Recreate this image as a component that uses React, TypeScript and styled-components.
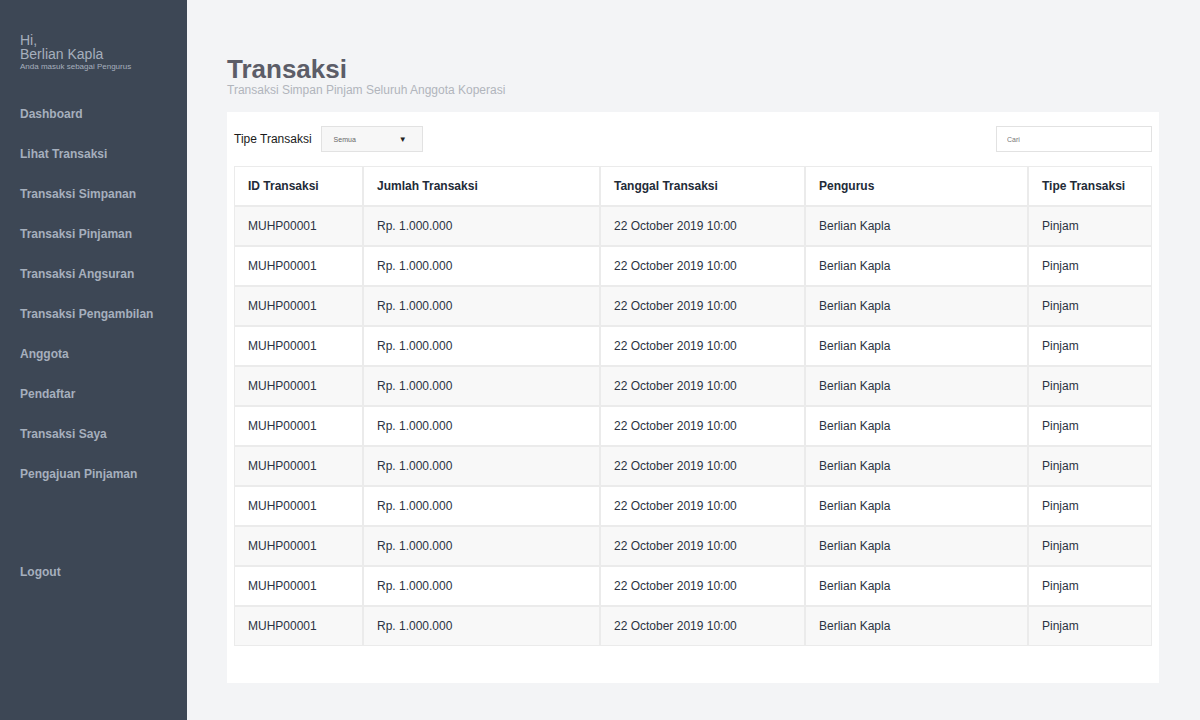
import React from "react";
import styled, { createGlobalStyle } from "styled-components";

const Global = createGlobalStyle`
  html, body { margin: 0; padding: 0; }
  body { font-family: "Liberation Sans", Arial, sans-serif; background: #f3f4f6; }
  * { box-sizing: border-box; }
`;

const Layout = styled.div`
  display: flex;
  width: 1200px;
  height: 720px;
  overflow: hidden;
`;

const Sidebar = styled.aside`
  width: 187px;
  flex-shrink: 0;
  background: #3d4755;
  padding: 33px 0 0 20px;
  display: flex;
  flex-direction: column;
`;

const Greeting = styled.div`
  color: #a6afbd;
  font-size: 14px;
  line-height: 14px;
`;

const Role = styled.div`
  color: #a6afbd;
  font-size: 8px;
  line-height: 10px;
  margin-top: 1px;
`;

const Nav = styled.nav`
  display: flex;
  flex-direction: column;
  margin-top: 22px;
`;

const NavItem = styled.a<{ $gap?: number }>`
  color: #a6afbd;
  font-weight: bold;
  font-size: 12px;
  line-height: 14px;
  padding: 13px 0;
  margin-top: ${(p) => p.$gap ?? 0}px;
  text-decoration: none;
  cursor: pointer;
`;

const Main = styled.main`
  flex: 1;
  padding: 54px 41px 0 40px;
  display: flex;
  flex-direction: column;
`;

const Title = styled.h1`
  margin: 0;
  font-size: 26px;
  line-height: 30px;
  font-weight: bold;
  color: #5c5d68;
`;

const Subtitle = styled.div`
  font-size: 12px;
  line-height: 14px;
  color: #b1b5bc;
  margin-top: -1px;
`;

const Card = styled.section`
  margin-top: 15px;
  background: #ffffff;
  padding: 14px 7px 37px 7px;
  display: flex;
  flex-direction: column;
`;

const Toolbar = styled.div`
  display: flex;
  align-items: center;
  justify-content: space-between;
  height: 26px;
`;

const FilterGroup = styled.div`
  display: flex;
  align-items: center;
  gap: 9px;
`;

const Label = styled.span`
  font-size: 12px;
  color: #1a1a1a;
`;

const Select = styled.div`
  width: 102px;
  height: 26px;
  border: 1px solid #e2e2e2;
  background: #f7f7f7;
  display: flex;
  align-items: center;
  justify-content: space-between;
  padding: 0 15px 0 12px;
  font-size: 7px;
  color: #666666;
`;

const Arrow = styled.span`
  font-size: 8px;
  color: #222;
`;

const Search = styled.input`
  width: 156px;
  height: 26px;
  border: 1px solid #e2e2e2;
  background: #ffffff;
  padding: 0 10px;
  font-size: 7px;
  font-family: "Liberation Sans", Arial, sans-serif;
  color: #666666;
  outline: none;
  &::placeholder { color: #777777; }
`;

const Table = styled.table`
  margin-top: 14px;
  width: 918px;
  border-collapse: separate;
  border-spacing: 0;
  table-layout: fixed;
`;

const Th = styled.th<{ $w: number }>`
  width: ${(p) => p.$w}px;
  height: 40px;
  border: 1px solid #ebebeb;
  padding: 0 13px;
  text-align: left;
  font-size: 12px;
  font-weight: bold;
  color: #232b38;
  background: #ffffff;
`;

const Tr = styled.tr<{ $alt: boolean }>`
  background: ${(p) => (p.$alt ? "#f8f8f8" : "#ffffff")};
`;

const Td = styled.td`
  height: 40px;
  border: 1px solid #ebebeb;
  padding: 0 13px;
  font-size: 12px;
  color: #2b3342;
`;

const navItems = [
  "Dashboard",
  "Lihat Transaksi",
  "Transaksi Simpanan",
  "Transaksi Pinjaman",
  "Transaksi Angsuran",
  "Transaksi Pengambilan",
  "Anggota",
  "Pendaftar",
  "Transaksi Saya",
  "Pengajuan Pinjaman",
];

const cols = [
  { label: "ID Transaksi", w: 129 },
  { label: "Jumlah Transaksi", w: 237 },
  { label: "Tanggal Transaksi", w: 205 },
  { label: "Pengurus", w: 223 },
  { label: "Tipe Transaksi", w: 124 },
];

const rows = Array.from({ length: 11 }, () => ({
  id: "MUHP00001",
  amount: "Rp. 1.000.000",
  date: "22 October 2019 10:00",
  admin: "Berlian Kapla",
  type: "Pinjam",
}));

export default function App() {
  return (
    <>
      <Global />
      <Layout>
        <Sidebar>
          <Greeting>Hi,</Greeting>
          <Greeting>Berlian Kapla</Greeting>
          <Role>Anda masuk sebagai Pengurus</Role>
          <Nav>
            {navItems.map((n) => (
              <NavItem key={n}>{n}</NavItem>
            ))}
            <NavItem $gap={58}>Logout</NavItem>
          </Nav>
        </Sidebar>
        <Main>
          <Title>Transaksi</Title>
          <Subtitle>Transaksi Simpan Pinjam Seluruh Anggota Koperasi</Subtitle>
          <Card>
            <Toolbar>
              <FilterGroup>
                <Label>Tipe Transaksi</Label>
                <Select>
                  <span>Semua</span>
                  <Arrow>▼</Arrow>
                </Select>
              </FilterGroup>
              <Search placeholder="Cari" />
            </Toolbar>
            <Table>
              <thead>
                <tr>
                  {cols.map((c) => (
                    <Th key={c.label} $w={c.w}>
                      {c.label}
                    </Th>
                  ))}
                </tr>
              </thead>
              <tbody>
                {rows.map((r, i) => (
                  <Tr key={i} $alt={i % 2 === 0}>
                    <Td>{r.id}</Td>
                    <Td>{r.amount}</Td>
                    <Td>{r.date}</Td>
                    <Td>{r.admin}</Td>
                    <Td>{r.type}</Td>
                  </Tr>
                ))}
              </tbody>
            </Table>
          </Card>
        </Main>
      </Layout>
    </>
  );
}
